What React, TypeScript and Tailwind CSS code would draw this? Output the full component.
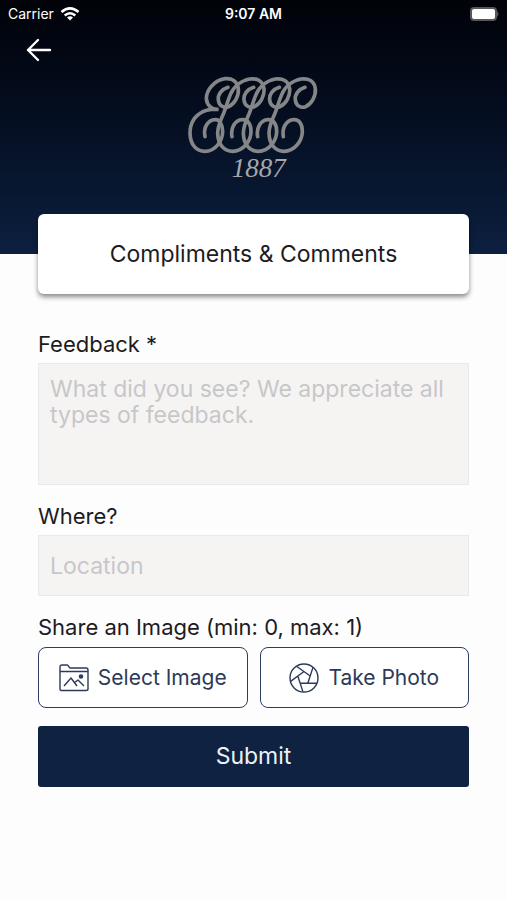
import type { ReactNode } from "react";

const font = "font-[Inter,'Liberation_Sans',sans-serif]";

// one looped letter of the monogram, repeated to the left
const letter = "M378 70C358 76 347 92 349 108C351 126 366 133 380 128C398 120 411 96 409 74C406 50 388 42 366 45C340 50 318 68 308 92C298 116 296 128 287 150C277 172 270 186 270 208C271 242 290 262 315 262C346 262 370 232 370 202C370 180 360 166 344 167C322 168 308 192 313 218"

const Logo = () => (
    <svg viewBox="0 0 450 375" className="w-[150px] h-[125px]" fill="none" stroke="#858688" strokeLinecap="round" role="img" aria-label="Club crest, 1887">
        <g strokeWidth="11">
            <path d="M147 70C127 76 116 92 118 108C120 126 135 133 149 128C167 120 180 96 178 74C175 50 157 42 138 44C108 48 82 76 82 104C84 126 100 138 118 136C108 134 86 136 72 143C46 156 33 180 33 208C34 242 52 262 78 262C108 262 131 232 131 202C130 180 122 166 108 167C86 168 72 192 78 218" />
            <path d={letter} transform="translate(-154 0)" />
            <path d={letter} transform="translate(-77 0)" />
            <path d={letter} />
        </g>
        <text x="158" y="338" fill="#a5a7ab" stroke="none" fontSize="81" fontStyle="italic" fontFamily="Liberation Serif">1887</text>
    </svg>
)

const FolderImage = () => (
    <svg viewBox="0 0 30 28" className="w-[30px] h-7 shrink-0" fill="none" stroke="currentColor" strokeWidth="1.4" strokeLinejoin="round">
        <path d="M1 25V3Q1 1 3 1H8Q9 1 10 3L11 4H27Q29 4 29 6V25Q29 26.5 27 26.5H3Q1 26.5 1 25ZM1 7.5H29M5 22L12 14L18 22M15 19L19 16L25 22" />
        <circle cx="22" cy="12.5" r="1.6" fill="currentColor" />
    </svg>
)

const Aperture = () => (
    <svg viewBox="0 0 30 30" className="size-[30px] shrink-0" fill="none" stroke="currentColor" strokeWidth="1.4">
        <circle cx="15" cy="15" r="14" />
        <path d="M11.2 20.3H28M18.8 20.3L23.9 4.6M21.2 13L7.5 3.2M15 8.5L1.6 18.4M8.8 13L13.8 28.4" />
    </svg>
)

const StatusBar = () => (
    <div className="grid grid-cols-3 items-center h-7 px-2 text-white text-sm">
        <div className="flex items-center gap-1.5">
            <span>Carrier</span>
            <svg viewBox="0 0 20 15" className="w-5 h-4" fill="none" stroke="white" strokeWidth="2.6">
                <path d="M1.5 5.5Q10-1.8 18.5 5.5M4.7 9Q10 4.5 15.3 9" />
                <path d="M7 11Q10 8.5 13 11L10 14Z" fill="white" stroke="none" />
            </svg>
        </div>
        <span className="text-center font-semibold">9:07 AM</span>
        <svg viewBox="0 0 30 16" className="w-[30px] h-4 justify-self-end">
            <rect x="1" y="1" width="27" height="14" rx="4" fill="#55575b" />
            <rect x="3" y="3" width="23" height="10" rx="2" fill="white" />
            <path d="M28 5Q31 8 28 11Z" fill="#55575b" />
        </svg>
    </div>
)

const OutlineButton = ({ icon, children }: { icon: ReactNode; children: ReactNode }) => (
    <button type="button" className="flex flex-1 items-center justify-center gap-[9px] h-[61px] rounded-lg border border-[#2c3e5f] bg-white text-[21px] text-[#2c3a58] whitespace-nowrap">
        {icon}
        {children}
    </button>
)

export default function App() {
    return (
        <div className={`min-h-screen bg-[#fdfdfd] text-[#1c1c1e] ${font}`}>
            <header className="h-[254px] bg-linear-to-b from-[#010309] to-[#0d2040]">
                <StatusBar />
                <div className="flex px-6 pt-2">
                    <button type="button" aria-label="Back" className="text-white">
                        <svg viewBox="0 0 28 28" className="size-7" fill="none" stroke="currentColor" strokeWidth="2.4" strokeLinecap="round" strokeLinejoin="round">
                            <path d="M26 14H4M14 4L4 14L14 24" />
                        </svg>
                    </button>
                </div>
                <div className="flex justify-center">
                    <Logo />
                </div>
            </header>

            <main className="px-[38px]">
                <h1 className="flex items-center justify-center h-20 -mt-10 rounded-md bg-white text-[23px] shadow-[0_3px_5px_rgba(0,0,0,0.45)]">
                    Compliments &amp; Comments
                </h1>

                <form className="flex flex-col pt-9">
                    <label htmlFor="feedback" className="text-[22px] leading-7">Feedback *</label>
                    <textarea
                        id="feedback"
                        placeholder="What did you see? We appreciate all types of feedback."
                        className="h-[122px] mt-[5px] px-[11px] py-3 resize-none border border-[#e9e9e9] bg-[#f5f4f3] text-[23px] leading-[26px] placeholder:text-[#c7c7c9]"
                    />

                    <label htmlFor="where" className="mt-[17px] text-[22px] leading-7">Where?</label>
                    <input
                        id="where"
                        type="text"
                        placeholder="Location"
                        className="h-[61px] mt-[5px] px-[11px] border border-[#e9e9e9] bg-[#f5f4f3] text-[23px] placeholder:text-[#c7c7c9]"
                    />

                    <p className="mt-[17px] text-[22px] leading-7">Share an Image (min: 0, max: 1)</p>
                    <div className="flex gap-3 mt-1.5">
                        <OutlineButton icon={<FolderImage />}>Select Image</OutlineButton>
                        <OutlineButton icon={<Aperture />}>Take Photo</OutlineButton>
                    </div>

                    <button type="submit" className="h-[61px] mt-[18px] rounded-[3px] bg-[#0f2241] text-[23px] text-[#eef1f6]">
                        Submit
                    </button>
                </form>
            </main>
        </div>
    )
}
